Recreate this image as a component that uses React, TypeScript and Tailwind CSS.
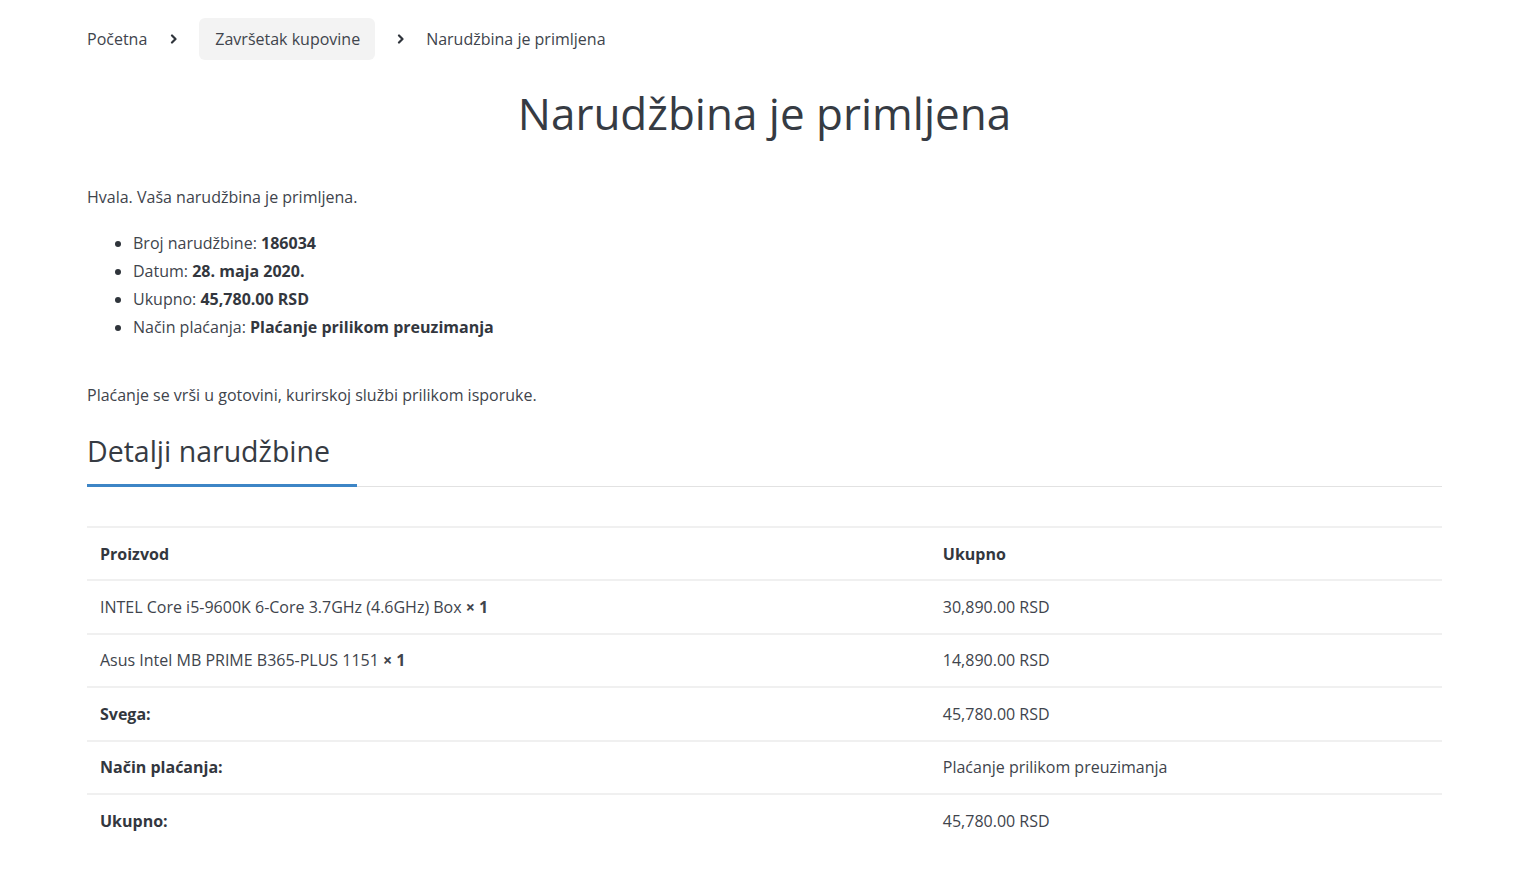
import React from "react";

const rows: { label: React.ReactNode; value: string; bold?: boolean }[] = [
  {
    label: (
      <>
        INTEL Core i5-9600K 6-Core 3.7GHz (4.6GHz) Box <strong className="font-bold">× 1</strong>
      </>
    ),
    value: "30,890.00 RSD",
  },
  {
    label: (
      <>
        Asus Intel MB PRIME B365-PLUS 1151 <strong className="font-bold">× 1</strong>
      </>
    ),
    value: "14,890.00 RSD",
  },
  { label: "Svega:", value: "45,780.00 RSD", bold: true },
  { label: "Način plaćanja:", value: "Plaćanje prilikom preuzimanja", bold: true },
  { label: "Ukupno:", value: "45,780.00 RSD", bold: true },
];

function Chevron() {
  return (
    <svg width="10" height="10" viewBox="0 0 10 10" className="text-[#2f343b]">
      <path d="M3 1.5 L6.5 5 L3 8.5" fill="none" stroke="currentColor" strokeWidth="2.2" strokeLinecap="round" strokeLinejoin="round" />
    </svg>
  );
}

export default function App() {
  return (
    <div
      className="min-h-screen bg-white text-[#40444c]"
      style={{ fontFamily: '"Open Sans", "Noto Sans", sans-serif' }}
    >
      <div className="pl-[87px] pr-[94px]">
        <nav className="flex items-center pt-[18px] text-[16px] text-[#40444c]">
          <span>Početna</span>
          <span className="ml-[22px] mr-[20px] flex items-center"><Chevron /></span>
          <span className="rounded-md bg-[#f3f3f3] pl-[16px] pr-[15px] h-[42px] flex items-center">Završetak kupovine</span>
          <span className="ml-[21px] mr-[20px] flex items-center"><Chevron /></span>
          <span>Narudžbina je primljena</span>
        </nav>

        <h1 className="mt-[21px] text-center text-[44px] leading-[64px] text-[#363b43]">
          Narudžbina je primljena
        </h1>

        <p className="mt-[40px] text-[16px] leading-[24px]">Hvala. Vaša narudžbina je primljena.</p>

        <ul className="mt-[20px] ml-[46px] list-disc text-[16px] leading-[28px] marker:text-[#2f343b]">
          <li>
            Broj narudžbine: <strong className="font-bold text-[#33373e]">186034</strong>
          </li>
          <li>
            Datum: <strong className="font-bold text-[#33373e]">28. maja 2020.</strong>
          </li>
          <li>
            Ukupno: <strong className="font-bold text-[#33373e]">45,780.00 RSD</strong>
          </li>
          <li>
            Način plaćanja: <strong className="font-bold text-[#33373e]">Plaćanje prilikom preuzimanja</strong>
          </li>
        </ul>

        <p className="mt-[42px] text-[16px] leading-[24px]">
          Plaćanje se vrši u gotovini, kurirskoj službi prilikom isporuke.
        </p>

        <div className="mt-[23px] border-b border-[#e2e2e2]">
          <h2 className="inline-block border-b-[3px] border-[#3d85c6] pr-[27px] pb-[12px] -mb-[1px] text-[28.5px] leading-[42px] text-[#363b43]">
            Detalji narudžbine
          </h2>
        </div>

        <table className="mt-[39px] w-full border-collapse text-[16px] text-[#40444c]">
          <thead>
            <tr className="border-t-2 border-b-2 border-[#f0f0f0]">
              <th className="w-[62.2%] h-[53px] pl-[13px] text-left font-bold text-[#33373e]">Proizvod</th>
              <th className="h-[53px] pl-[13px] text-left font-bold text-[#33373e]">Ukupno</th>
            </tr>
          </thead>
          <tbody>
            {rows.map((r, i) => (
              <tr key={i} className={i < rows.length - 1 ? "border-b-2 border-[#f0f0f0]" : ""}>
                <td className={`h-[53.5px] pl-[13px] ${r.bold ? "font-bold text-[#33373e]" : ""}`}>{r.label}</td>
                <td className="h-[53.5px] pl-[13px]">{r.value}</td>
              </tr>
            ))}
          </tbody>
        </table>
      </div>
    </div>
  );
}
